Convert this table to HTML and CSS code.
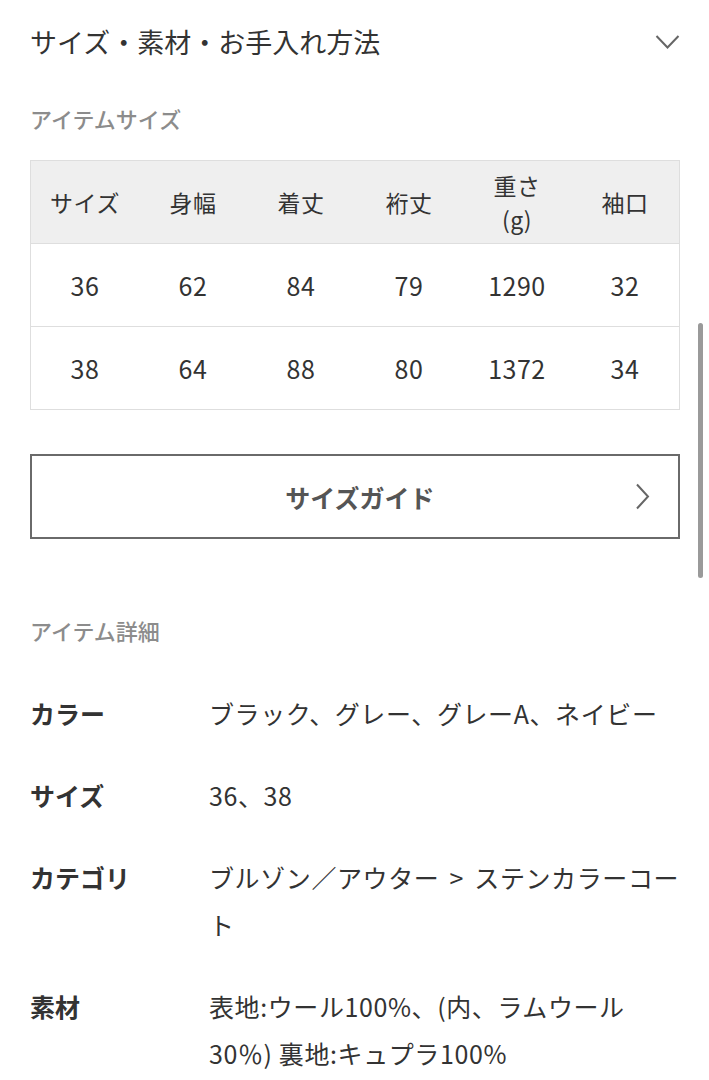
FILE: index.html
```html
<!DOCTYPE html>
<html lang="ja">
<head>
<meta charset="utf-8">
<title>サイズ・素材・お手入れ方法</title>
<link rel="stylesheet" href="styles.css">
</head>
<body>
<div class="page">
  <div class="acc-head">
    <h2 class="acc-title">サイズ・素材・お手入れ方法</h2>
    <svg class="chev-down" width="25" height="16" viewBox="0 0 25 16"><path d="M1.5 2 L12.5 13.5 L23.5 2" fill="none" stroke="#666" stroke-width="2"/></svg>
  </div>

  <h3 class="sub-title">アイテムサイズ</h3>
  <div class="size-table">
    <div class="st-row st-head">
      <div class="cell">サイズ</div>
      <div class="cell">身幅</div>
      <div class="cell">着丈</div>
      <div class="cell">裄丈</div>
      <div class="cell">重さ<br>(g)</div>
      <div class="cell">袖口</div>
    </div>
    <div class="st-row">
      <div class="cell">36</div>
      <div class="cell">62</div>
      <div class="cell">84</div>
      <div class="cell">79</div>
      <div class="cell">1290</div>
      <div class="cell">32</div>
    </div>
    <div class="st-row">
      <div class="cell">38</div>
      <div class="cell">64</div>
      <div class="cell">88</div>
      <div class="cell">80</div>
      <div class="cell">1372</div>
      <div class="cell">34</div>
    </div>
  </div>

  <a class="guide-btn" href="#">
    <span class="guide-label">サイズガイド</span>
    <svg class="chev-right" width="15" height="27" viewBox="0 0 15 27"><path d="M2 1.5 L13 13.5 L2 25.5" fill="none" stroke="#666" stroke-width="2"/></svg>
  </a>

  <h3 class="sub-title detail-title">アイテム詳細</h3>
  <dl class="details">
    <dt>カラー</dt>
    <dd>ブラック、グレー、グレーA、ネイビー</dd>
    <dt>サイズ</dt>
    <dd>36、38</dd>
    <dt>カテゴリ</dt>
    <dd>ブルゾン／アウター <span class="sep">&gt;</span> ステンカラーコー<br>ト</dd>
    <dt>素材</dt>
    <dd>表地:ウール100%、(内、ラムウール<br>30％) 裏地:キュプラ100%</dd>
  </dl>
</div>
<div class="scrollbar"></div>
</body>
</html>
```

FILE: styles.css
```css
* { box-sizing: border-box; }
html, body {
  margin: 0;
  padding: 0;
  background: #fff;
}
body {
  font-family: "Noto Sans CJK JP", "Noto Sans", sans-serif;
  color: #333;
  overflow: hidden;
}
.page {
  padding: 0 29px 0 30px;
}
.acc-head {
  height: 84px;
  display: flex;
  align-items: center;
  justify-content: space-between;
}
.acc-title {
  margin: 0;
  font-size: 27px;
  font-weight: 400;
  line-height: 36px;
  color: #333;
}
.chev-down {
  margin-top: -1px;
}
.sub-title {
  margin: 19px 0 0;
  font-size: 22px;
  line-height: 30px;
  font-weight: 500;
  color: #8c8c8c;
}
.size-table {
  margin-top: 27px;
  border: 1px solid #dedede;
}
.st-row {
  display: grid;
  grid-template-columns: repeat(6, 1fr);
  height: 82px;
  align-items: center;
  font-size: 25px;
  line-height: 30px;
}
.st-row + .st-row {
  border-top: 1px solid #dedede;
  height: 83px;
}
.st-head {
  background: #efefef;
  font-size: 23px;
  line-height: 34px;
}
.cell {
  text-align: center;
  letter-spacing: 0.5px;
}
.st-head .cell {
  letter-spacing: 0.5px;
}
.guide-btn {
  margin-top: 44px;
  height: 85px;
  border: 2px solid #6a6a6a;
  display: grid;
  grid-template-columns: 1fr auto 1fr;
  align-items: center;
  text-decoration: none;
  padding: 0 28px 0 38px;
}
.guide-label {
  grid-column: 2;
  font-size: 25px;
  font-weight: 700;
  color: #555;
  line-height: 30px;
}
.chev-right {
  grid-column: 3;
  justify-self: end;
}
.detail-title {
  margin-top: 76px;
}
.details {
  margin: 45px 0 0;
  display: grid;
  grid-template-columns: 179px 1fr;
  row-gap: 35px;
  font-size: 25px;
  line-height: 47px;
}
.details dt {
  font-weight: 700;
  color: #333;
}
.details dd {
  margin: 0;
  color: #333;
  letter-spacing: 0.6px;
}
.sep {
  padding: 0 4px;
}
.scrollbar {
  position: fixed;
  right: 6px;
  top: 323px;
  width: 5px;
  height: 255px;
  border-radius: 3px;
  background: #9a9a9a;
}
```
